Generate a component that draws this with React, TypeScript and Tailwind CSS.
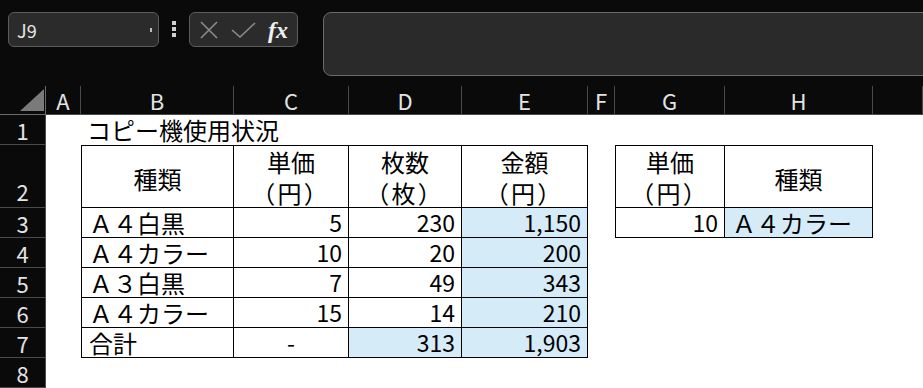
import React from "react";

const jp = "font-['Noto_Sans_CJK_JP','Noto_Sans',sans-serif]";

const cols = ["A", "B", "C", "D", "E", "F", "G", "H", ""];

function Cell({
  className = "",
  children,
}: {
  className?: string;
  children?: React.ReactNode;
}) {
  return <div className={`flex min-w-0 ${className}`}>{children}</div>;
}

function RowHead({ n, tall }: { n: number; tall?: boolean }) {
  return (
    <div
      className={`flex justify-center border-r border-b border-[#4a4a4a] bg-[#0a0a0a] text-[22px] leading-none text-[#e4e4e4] ${
        tall ? "items-end pb-[5px]" : "items-center"
      }`}
    >
      {n}
    </div>
  );
}

function TwoLine({ top, bottom, first }: { top: string; bottom: string; first?: boolean }) {
  return (
    <Cell
      className={`flex-col items-center justify-center border-t border-r border-b border-black text-[24px] leading-[31px] ${
        first ? "border-l" : ""
      }`}
    >
      <span>{top}</span>
      <span className="tracking-[3px] [font-feature-settings:'palt']">{bottom}</span>
    </Cell>
  );
}

export default function App() {
  const num = "items-center justify-end pr-[6px] text-[23px] leading-none";
  const txt = "items-center pl-[7px] text-[24px] leading-none whitespace-nowrap";
  const blue = "bg-[#d6ebf8]";

  return (
    <div className={`h-[388px] w-[923px] overflow-hidden bg-white ${jp}`}>
      {/* formula bar area */}
      <div className="flex h-[86px] items-start bg-[#0a0a0a] pt-[12px]">
        <div className="ml-[8px] flex h-[35px] w-[151px] items-center justify-between rounded-md border border-[#5c5c5c] bg-[#2b2b2b] px-[8px]">
          <span className="text-[18px] leading-none text-[#e6e6e6]">J9</span>
          <span className="mr-[-2px] h-[4px] w-[2px] bg-[#bdbdbd]" />
        </div>
        <div className="ml-[13px] mt-[9px] flex flex-col gap-[2px]">
          <span className="h-[4px] w-[4px] bg-[#d0d0d0]" />
          <span className="h-[4px] w-[4px] bg-[#d0d0d0]" />
          <span className="h-[4px] w-[4px] bg-[#d0d0d0]" />
        </div>
        <div className="ml-[13px] flex h-[35px] w-[109px] items-center rounded-md border border-[#5c5c5c] bg-[#2b2b2b] pl-[9px]">
          <svg width="20" height="20" viewBox="0 0 20 20" className="shrink-0">
            <path d="M2 2 L18 18 M18 2 L2 18" stroke="#8c8c8c" strokeWidth="1.6" fill="none" />
          </svg>
          <svg width="26" height="20" viewBox="0 0 26 20" className="ml-[12px] shrink-0">
            <path d="M1 10 L9 17 L24 3" stroke="#8c8c8c" strokeWidth="1.6" fill="none" />
          </svg>
          <span className="ml-[11px] font-['Liberation_Serif',serif] text-[24px] font-semibold italic leading-none text-[#f0f0f0]">
            fx
          </span>
        </div>
        <div className="ml-[25px] -mr-[20px] h-[64px] flex-1 rounded-lg border border-[#6a6a6a] bg-[#2a2a2a]" />
      </div>

      {/* sheet */}
      <div className="grid grid-cols-[46px_35px_153px_115px_113px_126px_27px_110px_148px_1fr] grid-rows-[29px_30px_63px_30px_30px_30px_30px_30px_30px] text-black">
        {/* column headers */}
        <div className="relative border-r border-b border-[#6a6a6a] bg-[#0a0a0a]">
          <svg width="24" height="22" viewBox="0 0 24 22" className="absolute left-[20px] top-[3px]">
            <path d="M24 0 L24 22 L0 22 Z" fill="#7a7a7a" />
          </svg>
        </div>
        {cols.map((c, i) => (
          <div
            key={i}
            className="flex items-center justify-center border-r border-b border-[#4a4a4a] bg-[#0a0a0a] text-[22px] leading-none text-[#e4e4e4]"
          >
            {c}
          </div>
        ))}

        {/* row 1 */}
        <RowHead n={1} />
        <Cell />
        <Cell className="items-end overflow-visible pb-[3px] pl-[6px] text-[24px] leading-none whitespace-nowrap">
          <span className="relative z-10">コピー機使用状況</span>
        </Cell>
        <Cell /><Cell /><Cell /><Cell /><Cell /><Cell /><Cell />

        {/* row 2 */}
        <RowHead n={2} tall />
        <Cell />
        <Cell className="items-center justify-center border-l border-t border-r border-b border-black pt-[4px] text-[24px] leading-none">種類</Cell>
        <TwoLine top="単価" bottom="（円）" />
        <TwoLine top="枚数" bottom="（枚）" />
        <TwoLine top="金額" bottom="（円）" />
        <Cell />
        <TwoLine top="単価" bottom="（円）" first />
        <Cell className="items-center justify-center border-t border-r border-b border-black pt-[4px] text-[24px] leading-none">種類</Cell>
        <Cell />

        {/* row 3 */}
        <RowHead n={3} />
        <Cell />
        <Cell className={`${txt} border-l border-r border-b border-black`}>Ａ４白黒</Cell>
        <Cell className={`${num} border-r border-b border-black`}>5</Cell>
        <Cell className={`${num} border-r border-b border-black`}>230</Cell>
        <Cell className={`${num} ${blue} border-r border-b border-black`}>1,150</Cell>
        <Cell />
        <Cell className={`${num} border-l border-r border-b border-black`}>10</Cell>
        <Cell className={`${txt} ${blue} border-r border-b border-black`}>Ａ４カラー</Cell>
        <Cell />

        {/* row 4 */}
        <RowHead n={4} />
        <Cell />
        <Cell className={`${txt} border-l border-r border-b border-black`}>Ａ４カラー</Cell>
        <Cell className={`${num} border-r border-b border-black`}>10</Cell>
        <Cell className={`${num} border-r border-b border-black`}>20</Cell>
        <Cell className={`${num} ${blue} border-r border-b border-black`}>200</Cell>
        <Cell /><Cell /><Cell /><Cell />

        {/* row 5 */}
        <RowHead n={5} />
        <Cell />
        <Cell className={`${txt} border-l border-r border-b border-black`}>Ａ３白黒</Cell>
        <Cell className={`${num} border-r border-b border-black`}>7</Cell>
        <Cell className={`${num} border-r border-b border-black`}>49</Cell>
        <Cell className={`${num} ${blue} border-r border-b border-black`}>343</Cell>
        <Cell /><Cell /><Cell /><Cell />

        {/* row 6 */}
        <RowHead n={6} />
        <Cell />
        <Cell className={`${txt} border-l border-r border-b border-black`}>Ａ４カラー</Cell>
        <Cell className={`${num} border-r border-b border-black`}>15</Cell>
        <Cell className={`${num} border-r border-b border-black`}>14</Cell>
        <Cell className={`${num} ${blue} border-r border-b border-black`}>210</Cell>
        <Cell /><Cell /><Cell /><Cell />

        {/* row 7 */}
        <RowHead n={7} />
        <Cell />
        <Cell className={`${txt} border-l border-r border-b border-black`}>合計</Cell>
        <Cell className="items-center justify-center border-r border-b border-black text-[23px] leading-none">-</Cell>
        <Cell className={`${num} ${blue} border-r border-b border-black`}>313</Cell>
        <Cell className={`${num} ${blue} border-r border-b border-black`}>1,903</Cell>
        <Cell /><Cell /><Cell /><Cell />

        {/* row 8 */}
        <RowHead n={8} />
        <Cell /><Cell /><Cell /><Cell /><Cell /><Cell /><Cell /><Cell /><Cell />
      </div>
    </div>
  );
}
